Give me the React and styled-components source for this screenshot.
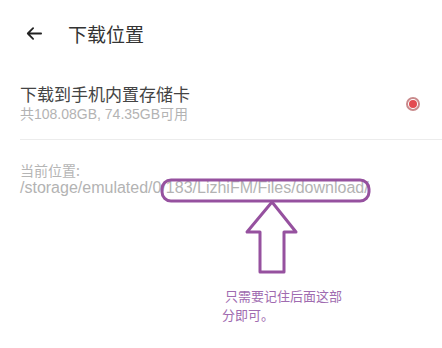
import styled, { createGlobalStyle } from "styled-components";

const GlobalStyle = createGlobalStyle`
  body {
    margin: 0;
    background: #ffffff;
    font-family: "Liberation Sans", "Noto Sans CJK SC", sans-serif;
  }
`;

export default function App() {
    return (
        <Page>
            <GlobalStyle />
            <Header>
                <Back viewBox="0 0 18 16">
                    <path d="M17 8H2M8 2L2 8l6 6" />
                </Back>
                <Title>下载位置</Title>
            </Header>

            <StorageRow>
                <RowText>
                    <RowTitle>下载到手机内置存储卡</RowTitle>
                    <RowSub>共108.08GB, 74.35GB可用</RowSub>
                </RowText>
                <Radio />
            </StorageRow>
            <Divider />

            <Location>
                <Label>当前位置:</Label>
                <Path>/storage/emulated/0/183/LizhiFM/Files/download/</Path>
            </Location>

            <Marks viewBox="0 0 442 348">
                <rect x="162" y="180" width="207" height="21" rx="9" />
                <path d="M272 202 L247 232 L260 232 L260 272 L284 272 L284 232 L296 232 Z" />
            </Marks>
            <Note>
                &nbsp;只需要记住后面这部
                <br />
                分即可。
            </Note>
        </Page>
    );
}

const Page = styled.div`
    position: relative;
    width: 442px;
    height: 348px;
    overflow: hidden;
    background: #ffffff;
`;

const Header = styled.div`
    display: flex;
    align-items: center;
    height: 66px;
    padding-left: 26px;
`;

const Back = styled.svg`
    width: 16px;
    height: 15px;
    fill: none;
    stroke: #222;
    stroke-width: 2;
    stroke-linecap: round;
    stroke-linejoin: round;
`;

const Title = styled.div`
    margin-left: 26px;
    font-family: "Noto Sans CJK SC", sans-serif;
    font-size: 19px;
    color: #333;
`;

const StorageRow = styled.div`
    display: flex;
    align-items: center;
    justify-content: space-between;
    padding: 17px 22px 16px 20px;
`;

const RowText = styled.div`
    display: flex;
    flex-direction: column;
`;

const RowTitle = styled.div`
    font-family: "Noto Sans CJK SC", sans-serif;
    font-size: 17px;
    line-height: 22px;
    color: #444;
`;

const RowSub = styled.div`
    font-family: "Liberation Sans", "Noto Sans CJK SC", sans-serif;
    font-size: 14px;
    line-height: 18px;
    color: #b3b3b3;
`;

const Radio = styled.div`
    width: 10px;
    height: 10px;
    border-radius: 50%;
    border: 2px solid #c98a8c;
    display: grid;
    place-items: center;
    margin-top: 2px;

    &::after {
        content: "";
        width: 8px;
        height: 8px;
        border-radius: 50%;
        background: #e34a50;
    }
`;

const Divider = styled.div`
    height: 1px;
    margin-left: 20px;
    background: #ececec;
`;

const Location = styled.div`
    display: flex;
    flex-direction: column;
    padding: 22px 20px 0 20px;
`;

const Label = styled.div`
    font-family: "Noto Sans CJK SC", sans-serif;
    font-size: 14px;
    line-height: 17px;
    color: #b5b5b5;
`;

const Path = styled.div`
    font-size: 16px;
    line-height: 18px;
    color: #b3b3b3;
    white-space: nowrap;
`;

const Marks = styled.svg`
    position: absolute;
    left: 0;
    top: 0;
    width: 442px;
    height: 348px;
    fill: none;
    stroke: #96519f;
    stroke-width: 3;
    stroke-linejoin: round;
`;

const Note = styled.div`
    position: absolute;
    left: 222px;
    top: 286px;
    font-family: "Noto Sans CJK SC", sans-serif;
    font-size: 13px;
    line-height: 19px;
    color: #a06bb0;
`;
